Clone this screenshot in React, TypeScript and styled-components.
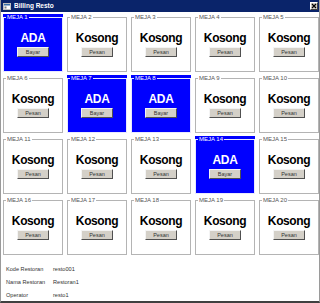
import React from 'react';
import styled, { createGlobalStyle } from 'styled-components';

const GlobalStyle = createGlobalStyle`
  html, body {
    margin: 0;
    padding: 0;
    background: #ffffff;
  }
  body {
    font-family: "Liberation Sans", Arial, sans-serif;
  }
`;

const Window = styled.div`
  width: 320px;
  height: 303px;
  box-sizing: border-box;
  background: #ffffff;
  border-left: 1px solid #9a9a9a;
  border-right: 1px solid #9a9a9a;
  border-bottom: 2px solid #404040;
  display: flex;
  flex-direction: column;
  overflow: hidden;
`;

const TitleBar = styled.div`
  height: 12px;
  flex: none;
  background: #0a246a;
  display: flex;
  align-items: center;
  padding: 0 1px 0 2px;
  gap: 3px;
`;

const TitleText = styled.span`
  color: #ffffff;
  font-size: 6.5px;
  font-weight: 700;
  flex: 1;
  line-height: 12px;
`;

const CloseButton = styled.div`
  width: 8px;
  height: 8px;
  box-sizing: border-box;
  background: #d4d0c8;
  border: 1px solid;
  border-color: #ffffff #404040 #404040 #ffffff;
  display: flex;
  align-items: center;
  justify-content: center;
`;

const Grid = styled.div`
  display: grid;
  grid-template-columns: repeat(5, 60px);
  grid-auto-rows: 58px;
  column-gap: 4px;
  row-gap: 3px;
  padding: 2px 2px 0 2px;
`;

const Cell = styled.div<{ $busy: boolean }>`
  background: ${(p) => (p.$busy ? '#0000ff' : '#ffffff')};
  display: flex;
`;

const Group = styled.fieldset<{ $busy: boolean }>`
  flex: 1;
  margin: 0;
  padding: 0;
  min-width: 0;
  border: 1px solid ${(p) => (p.$busy ? '#e8e8ff' : '#b4b4b4')};
  box-shadow: ${(p) => (p.$busy ? 'none' : 'inset 1px 1px 0 #ffffff')};
`;

const Legend = styled.legend<{ $busy: boolean }>`
  font-size: 6px;
  line-height: 7px;
  padding: 0 1px;
  margin-left: 2px;
  color: ${(p) => (p.$busy ? '#ffffff' : '#555555')};
`;

const Body = styled.div`
  display: flex;
  flex-direction: column;
  align-items: center;
`;

const Status = styled.div<{ $busy: boolean }>`
  margin-top: 10px;
  font-size: 12px;
  line-height: 14px;
  font-weight: 700;
  letter-spacing: -0.4px;
  color: ${(p) => (p.$busy ? '#ffffff' : '#000000')};
`;

const Button = styled.div`
  margin-top: 2px;
  width: 32px;
  height: 10px;
  box-sizing: border-box;
  background: #d4d0c8;
  border: 1px solid;
  border-color: #f4f4f4 #505050 #505050 #f4f4f4;
  font-size: 5.5px;
  line-height: 8px;
  text-align: center;
  color: #333333;
`;

const Info = styled.div`
  display: grid;
  grid-template-columns: 47px auto;
  grid-template-rows: 13px 13px 14px;
  align-items: center;
  padding: 7px 0 0 5px;
  font-size: 5.6px;
  color: #333333;
`;

const tables = [1, 7, 8, 14];

export default function App() {
  const cells = Array.from({ length: 20 }, (_, i) => i + 1);

  return (
    <>
      <GlobalStyle />
      <Window>
        <TitleBar>
          <svg width="8" height="8" viewBox="0 0 8 8">
            <rect x="0.5" y="1.5" width="7" height="6" fill="#ffffff" stroke="#c0c0c0" />
            <rect x="1" y="2" width="6" height="1.5" fill="#3a6ea5" />
            <rect x="1.5" y="4.5" width="2" height="2" fill="#808080" />
          </svg>
          <TitleText>Billing Resto</TitleText>
          <CloseButton>
            <svg width="6" height="6" viewBox="0 0 6 6">
              <path d="M1 1 L5 5 M5 1 L1 5" stroke="#000000" strokeWidth="1.2" />
            </svg>
          </CloseButton>
        </TitleBar>

        <Grid>
          {cells.map((n) => {
            const busy = tables.includes(n);
            return (
              <Cell key={n} $busy={busy}>
                <Group $busy={busy}>
                  <Legend $busy={busy}>MEJA {n}</Legend>
                  <Body>
                    <Status $busy={busy}>{busy ? 'ADA' : 'Kosong'}</Status>
                    <Button>{busy ? 'Bayar' : 'Pesan'}</Button>
                  </Body>
                </Group>
              </Cell>
            );
          })}
        </Grid>

        <Info>
          <span>Kode Restoran</span>
          <span>resto001</span>
          <span>Nama Restoran</span>
          <span>Restoran1</span>
          <span>Operator</span>
          <span>resto1</span>
        </Info>
      </Window>
    </>
  );
}
